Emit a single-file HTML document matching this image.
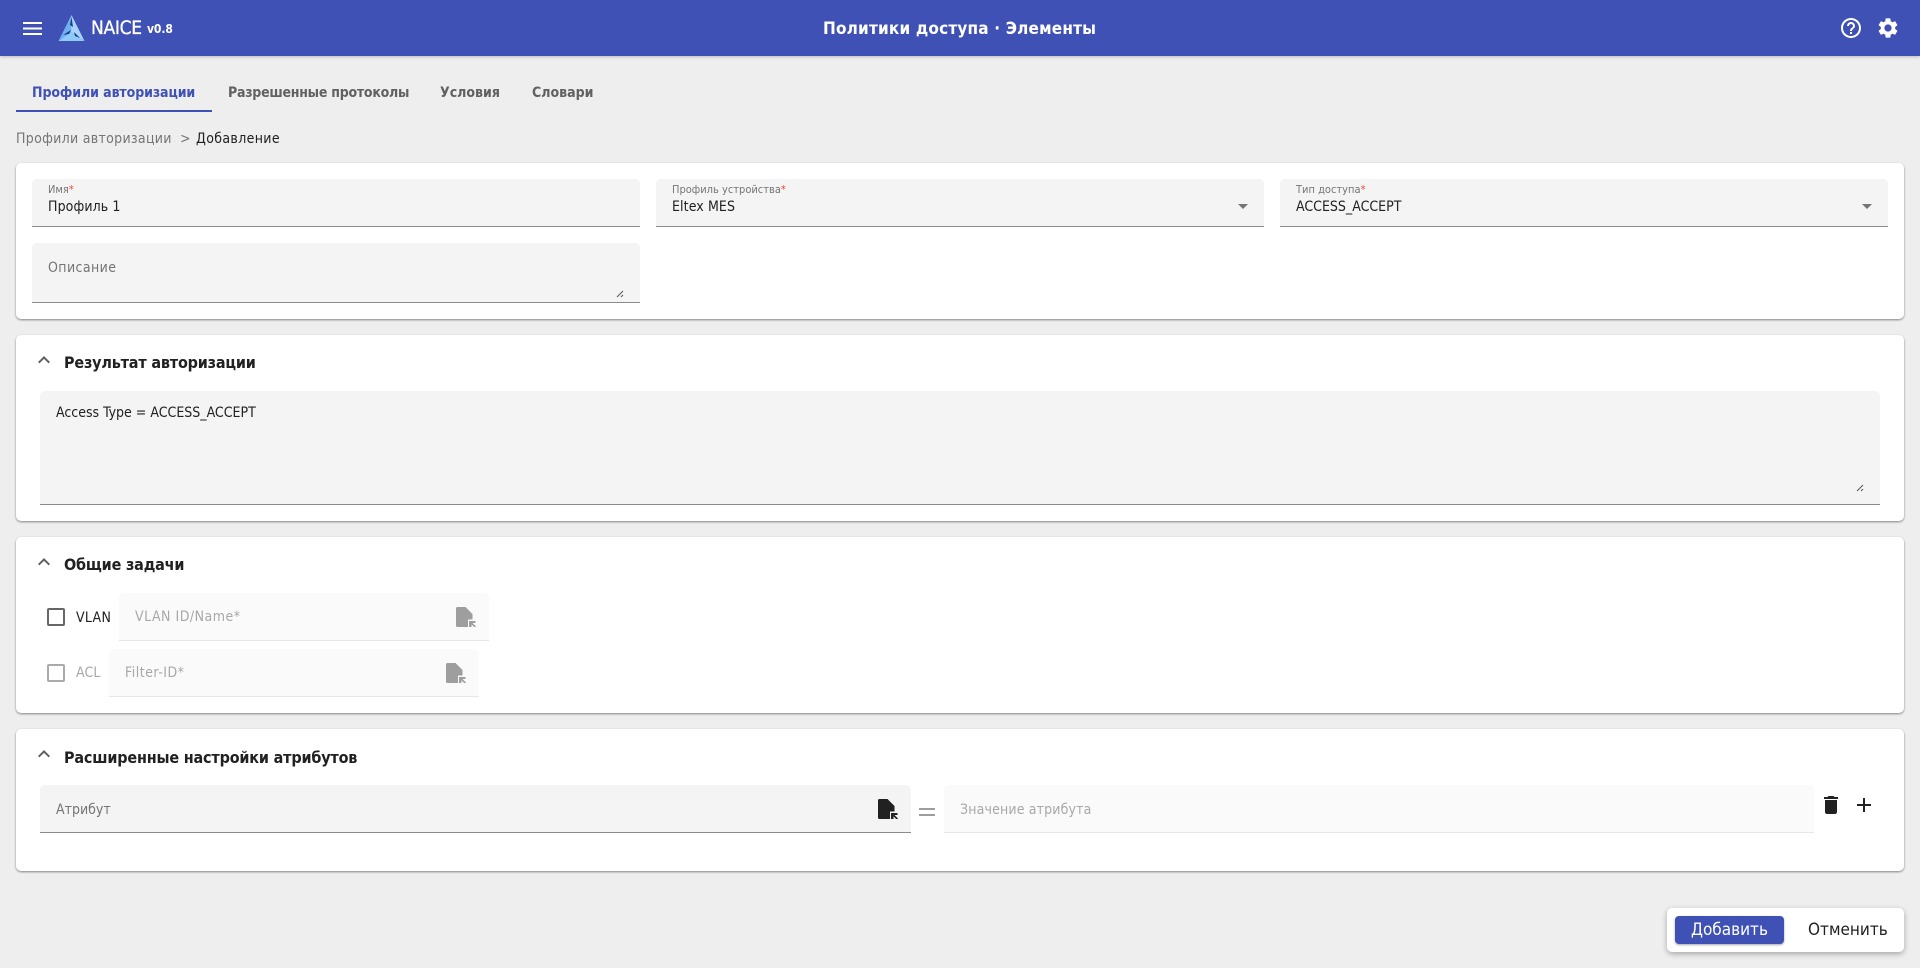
<!DOCTYPE html>
<html lang="ru"><head><meta charset="utf-8"><title>NAICE</title>
<style>
*{box-sizing:border-box}
html,body{margin:0;padding:0;width:1920px;height:968px;overflow:hidden;background:#eee;font-family:"DejaVu Sans","Liberation Sans",sans-serif;font-size:14px;font-stretch:condensed;color:#212121}
.a{position:absolute}
.t{position:absolute;white-space:nowrap;line-height:20px;height:20px}
header{position:absolute;left:0;top:0;width:1920px;height:56px;background:#3f51b5;box-shadow:0 1px 3px rgba(0,0,0,.2)}
.card{position:absolute;left:16px;width:1888px;background:#fff;border-radius:5px;box-shadow:0 1px 2px rgba(0,0,0,.45)}
.f{position:absolute;background:#f4f4f4;border-bottom:1px solid #8c8c8c;border-radius:5px 5px 0 0}
.d{position:absolute;background:#fafafa;border-bottom:1px solid #e8e8e8;border-radius:5px 5px 0 0}
.lb{font-size:11px;color:#757575}
.lb b{color:#f44336;font-weight:400}
.ti{font-weight:700;font-size:16px;color:#212121;letter-spacing:-.18px}
.tab{font-weight:700;font-size:14px;color:#616161}
.gr{color:#757575}
.ph{color:#a8a8a8}
svg{position:absolute;display:block}
</style></head><body>
<header>
<svg style="left:23px;top:22px" width="19" height="13" viewBox="0 0 19 13"><path fill="#fff" d="M0 0h19v2H0zM0 5.500h19v2H0zM0 11h19v2H0z"/></svg>
<svg style="left:58px;top:15px" width="27" height="26" viewBox="0 0 27 26"><path fill="#6fb1ef" d="M13.500 0L13 17 .5 26z"/><path fill="#a6d4fa" d="M13.500 0L26.500 26 13 17z"/><path fill="#90caf9" d="M.5 26L13 17l13.500 9z"/><path fill="#1f3a8f" d="M13.500 2l1.500 10-3 -2zM5 20l8-5-2 4zM16 17l6 6-5-2z"/></svg>
<div class="t" style="left:91px;top:18px;font-size:19px;font-weight:400;color:#fff;letter-spacing:-.3px;-webkit-text-stroke:.3px #fff">NAICE</div>
<div class="t" style="left:147px;top:19px;font-size:12px;font-weight:700;color:#fff;letter-spacing:-.1px">v0.8</div>
<div class="t" style="left:823px;top:19px;font-size:17px;font-weight:700;color:#fff;letter-spacing:.18px">Политики доступа · Элементы</div>
<svg style="left:1839px;top:16px" width="24" height="24" viewBox="0 0 24 24"><path fill="#fff" d="M11 18h2v-2h-2v2zm1-16C6.480 2 2 6.480 2 12s4.480 10 10 10 10-4.480 10-10S17.520 2 12 2zm0 18c-4.410 0-8-3.590-8-8s3.590-8 8-8 8 3.590 8 8-3.590 8-8 8zm0-14c-2.210 0-4 1.790-4 4h2c0-1.100.9-2 2-2s2 .9 2 2c0 2-3 1.750-3 5h2c0-2.250 3-2.500 3-5 0-2.210-1.790-4-4-4z"/></svg>
<svg style="left:1876px;top:16px" width="24" height="24" viewBox="0 0 24 24"><path fill="#fff" d="M19.140 12.940c.04-.3.06-.61.06-.94 0-.32-.02-.64-.07-.94l2.030-1.580c.18-.14.23-.41.12-.61l-1.920-3.320c-.12-.22-.37-.29-.59-.22l-2.390.96c-.5-.38-1.030-.7-1.620-.94l-.36-2.540c-.04-.24-.24-.41-.48-.41h-3.840c-.24 0-.43.17-.47.41l-.36 2.540c-.59.24-1.130.57-1.620.94l-2.390-.96c-.22-.08-.47 0-.59.22L2.740 8.870c-.12.21-.08.47.12.61l2.030 1.580c-.05.3-.09.63-.09.94s.02.64.07.94l-2.030 1.580c-.18.14-.23.41-.12.61l1.920 3.320c.12.22.37.29.59.22l2.390-.96c.5.38 1.030.7 1.620.94l.36 2.540c.05.24.24.41.48.41h3.840c.24 0 .44-.17.47-.41l.36-2.540c.59-.24 1.130-.56 1.620-.94l2.390.96c.22.08.47 0 .59-.22l1.920-3.320c.12-.22.07-.47-.12-.61l-2.010-1.580zM12 15.600c-1.980 0-3.600-1.620-3.600-3.600s1.620-3.600 3.600-3.600 3.600 1.620 3.600 3.600-1.620 3.600-3.600 3.600z"/></svg>
</header>

<div class="t tab" style="left:32px;top:83px;color:#3f51b5;letter-spacing:-.1px">Профили авторизации</div>
<div class="a" style="left:16px;top:110px;width:196px;height:2px;background:#3f51b5"></div>
<div class="t tab" style="left:228px;top:83px;letter-spacing:-.25px">Разрешенные протоколы</div>
<div class="t tab" style="left:440px;top:83px">Условия</div>
<div class="t tab" style="left:532px;top:83px">Словари</div>

<div class="t gr" style="left:16px;top:129px;letter-spacing:.3px">Профили авторизации</div>
<div class="t gr" style="left:180px;top:129px">&gt;</div>
<div class="t" style="left:196px;top:129px;letter-spacing:.35px">Добавление</div>

<div class="card" style="top:163px;height:156px"></div>
<div class="f" style="left:32px;top:179px;width:608px;height:48px"></div>
<div class="t lb" style="left:48px;top:180px">Имя<b>*</b></div>
<div class="t" style="left:48px;top:197px;letter-spacing:.1px">Профиль 1</div>
<div class="f" style="left:656px;top:179px;width:608px;height:48px"></div>
<div class="t lb" style="left:672px;top:180px">Профиль устройства<b>*</b></div>
<div class="t" style="left:672px;top:197px;letter-spacing:.1px">Eltex MES</div>
<svg style="left:1238px;top:204px" width="10" height="5" viewBox="0 0 10 5"><path fill="#757575" d="M0 0h10L5 5z"/></svg>
<div class="f" style="left:1280px;top:179px;width:608px;height:48px"></div>
<div class="t lb" style="left:1296px;top:180px">Тип доступа<b>*</b></div>
<div class="t" style="left:1296px;top:197px">ACCESS_ACCEPT</div>
<svg style="left:1862px;top:204px" width="10" height="5" viewBox="0 0 10 5"><path fill="#757575" d="M0 0h10L5 5z"/></svg>
<div class="f" style="left:32px;top:243px;width:608px;height:60px"></div>
<div class="t gr" style="left:48px;top:258px;letter-spacing:.4px">Описание</div>
<svg style="left:616px;top:290px" width="8" height="8" viewBox="0 0 8 8"><path stroke="#555" stroke-width="1" d="M1 7L7 1M5 7L7 5"/></svg>

<div class="card" style="top:335px;height:186px"></div>
<svg style="left:32px;top:348px" width="24" height="24" viewBox="0 0 24 24"><path fill="#616161" d="M12 8l-6 6 1.410 1.410L12 10.830l4.590 4.580L18 14z"/></svg>
<div class="t ti" style="left:64px;top:353px">Результат авторизации</div>
<div class="f" style="left:40px;top:391px;width:1840px;height:114px"></div>
<div class="t" style="left:56px;top:403px">Access Type = ACCESS_ACCEPT</div>
<svg style="left:1856px;top:484px" width="8" height="8" viewBox="0 0 8 8"><path stroke="#555" stroke-width="1" d="M1 7L7 1M5 7L7 5"/></svg>

<div class="card" style="top:537px;height:176px"></div>
<svg style="left:32px;top:550px" width="24" height="24" viewBox="0 0 24 24"><path fill="#616161" d="M12 8l-6 6 1.410 1.410L12 10.830l4.590 4.580L18 14z"/></svg>
<div class="t ti" style="left:64px;top:555px">Общие задачи</div>
<div class="a" style="left:47px;top:608px;width:18px;height:18px;border:2px solid #666;border-radius:2px"></div>
<div class="t" style="left:76px;top:608px;letter-spacing:.3px">VLAN</div>
<div class="d" style="left:119px;top:593px;width:370px;height:48px"></div>
<div class="t ph" style="left:135px;top:607px;letter-spacing:.5px">VLAN ID/Name*</div>
<svg style="left:456px;top:607px" width="20" height="20" viewBox="0 0 20 20"><path fill="#9e9e9e" d="M1.500 0H9.500L16.500 7V12.500H12V20H1.500A1.500 1.500 0 0 1 0 18.500V1.500A1.500 1.500 0 0 1 1.500 0z"/><path fill="#9e9e9e" d="M13 14h6.500v2h-3l3.500 3.500-1.200 1.200-3.300-3.300V20H13z"/></svg>
<div class="a" style="left:47px;top:664px;width:18px;height:18px;border:2px solid #aaa;border-radius:2px"></div>
<div class="t ph" style="left:76px;top:663px;letter-spacing:.1px">ACL</div>
<div class="d" style="left:109px;top:649px;width:370px;height:48px"></div>
<div class="t ph" style="left:125px;top:663px;letter-spacing:.5px">Filter-ID*</div>
<svg style="left:446px;top:663px" width="20" height="20" viewBox="0 0 20 20"><path fill="#9e9e9e" d="M1.500 0H9.500L16.500 7V12.500H12V20H1.500A1.500 1.500 0 0 1 0 18.500V1.500A1.500 1.500 0 0 1 1.500 0z"/><path fill="#9e9e9e" d="M13 14h6.500v2h-3l3.500 3.500-1.200 1.200-3.300-3.300V20H13z"/></svg>

<div class="card" style="top:729px;height:142px"></div>
<svg style="left:32px;top:742px" width="24" height="24" viewBox="0 0 24 24"><path fill="#616161" d="M12 8l-6 6 1.410 1.410L12 10.830l4.590 4.580L18 14z"/></svg>
<div class="t ti" style="left:64px;top:748px">Расширенные настройки атрибутов</div>
<div class="f" style="left:40px;top:785px;width:871px;height:48px"></div>
<div class="t gr" style="left:56px;top:800px">Атрибут</div>
<svg style="left:878px;top:799px" width="20" height="20" viewBox="0 0 20 20"><path fill="#212121" d="M1.500 0H9.500L16.500 7V12.500H12V20H1.500A1.500 1.500 0 0 1 0 18.500V1.500A1.500 1.500 0 0 1 1.500 0z"/><path fill="#212121" d="M13 14h6.500v2h-3l3.500 3.500-1.200 1.200-3.300-3.300V20H13z"/></svg>
<div class="a" style="left:919px;top:808px;width:16px;height:2px;background:#9e9e9e"></div>
<div class="a" style="left:919px;top:814px;width:16px;height:2px;background:#9e9e9e"></div>
<div class="d" style="left:944px;top:785px;width:870px;height:48px"></div>
<div class="t ph" style="left:960px;top:800px;letter-spacing:.15px">Значение атрибута</div>
<svg style="left:1818.500px;top:793px" width="24" height="24" viewBox="0 0 24 24"><path fill="#212121" d="M6 19c0 1.100.9 2 2 2h8c1.100 0 2-.9 2-2V7H6v12zM19 4h-3.500l-1-1h-5l-1 1H5v2h14V4z"/></svg>
<svg style="left:1851.500px;top:793px" width="24" height="24" viewBox="0 0 24 24"><path fill="#212121" d="M19 13h-6v6h-2v-6H5v-2h6V5h2v6h6v2z"/></svg>

<div class="a" style="left:1667px;top:908px;width:237px;height:44px;background:#fff;border-radius:5px;box-shadow:0 2px 6px rgba(0,0,0,.3)"></div>
<div class="a" style="left:1675px;top:916px;width:109px;height:28px;background:#3f51b5;border-radius:4px;box-shadow:0 1px 2px rgba(0,0,0,.35)"></div>
<div class="t" style="left:1691px;top:920px;font-size:17px;color:#fff">Добавить</div>
<div class="t" style="left:1808px;top:920px;font-size:17px;color:#212121">Отменить</div>
</body></html>
